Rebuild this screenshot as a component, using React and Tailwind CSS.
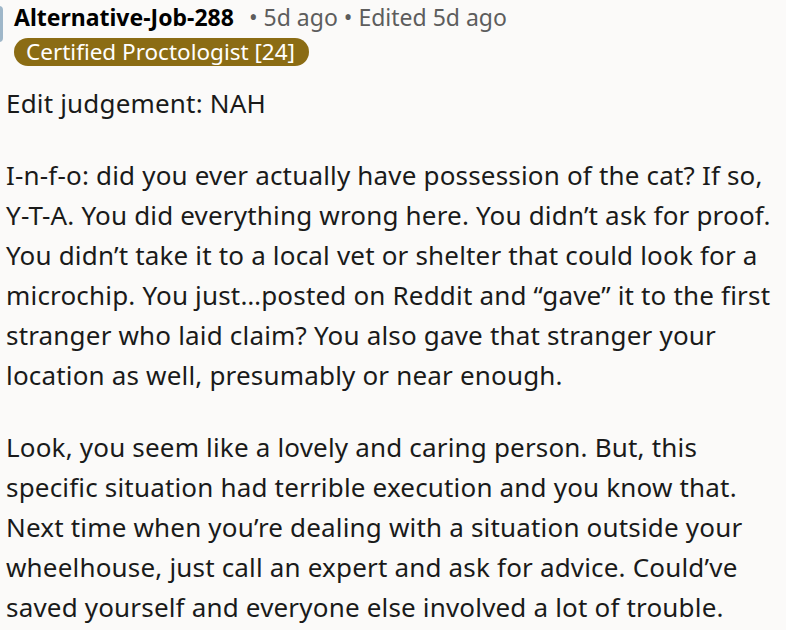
const lines1 = [
  "I-n-f-o: did you ever actually have possession of the cat? If so,",
  "Y-T-A. You did everything wrong here. You didn\u2019t ask for proof.",
  "You didn\u2019t take it to a local vet or shelter that could look for a",
  "microchip. You just\u2026posted on Reddit and \u201cgave\u201d it to the first",
  "stranger who laid claim? You also gave that stranger your",
  "location as well, presumably or near enough.",
];

const lines2 = [
  "Look, you seem like a lovely and caring person. But, this",
  "specific situation had terrible execution and you know that.",
  "Next time when you\u2019re dealing with a situation outside your",
  "wheelhouse, just call an expert and ask for advice. Could\u2019ve",
  "saved yourself and everyone else involved a lot of trouble.",
];

const Para = ({ lines }) => (
  <p className="text-[26px] leading-[40px] tracking-[0.18px] whitespace-nowrap">
    {lines.map((l, i) => (
      <span key={i} className="block">
        {l}
      </span>
    ))}
  </p>
);

export default function App() {
  return (
    <div
      className="min-h-screen w-[786px] h-[630px] overflow-hidden bg-[#fbfaf9] text-[#1a1a1a] relative"
      style={{ fontFamily: '"Noto Sans", "Open Sans", sans-serif' }}
    >
      {/* avatar sliver at the left edge */}
      <div className="absolute left-[-30px] top-[6px] w-[33px] h-[36px] rounded-[4px] bg-[#9fb7c9]" />

      <div className="pl-[14px]">
        <div className="flex items-baseline gap-[15px] h-[36px]">
          <span className="font-bold text-[23px] text-black">Alternative-Job-288</span>
          <span className="text-[23px] text-[#5d5d5d]">• 5d ago • Edited 5d ago</span>
        </div>
        <span className="inline-flex items-center h-[28px] pl-[12px] pr-[14px] rounded-full bg-[#8b6c14] text-white text-[22.5px] leading-none mt-[2px]">
          Certified Proctologist [24]
        </span>
      </div>

      <div className="pl-[6px] pt-[17px] flex flex-col gap-[32px]">
        <Para lines={["Edit judgement: NAH"]} />
        <Para lines={lines1} />
        <Para lines={lines2} />
      </div>
    </div>
  );
}
